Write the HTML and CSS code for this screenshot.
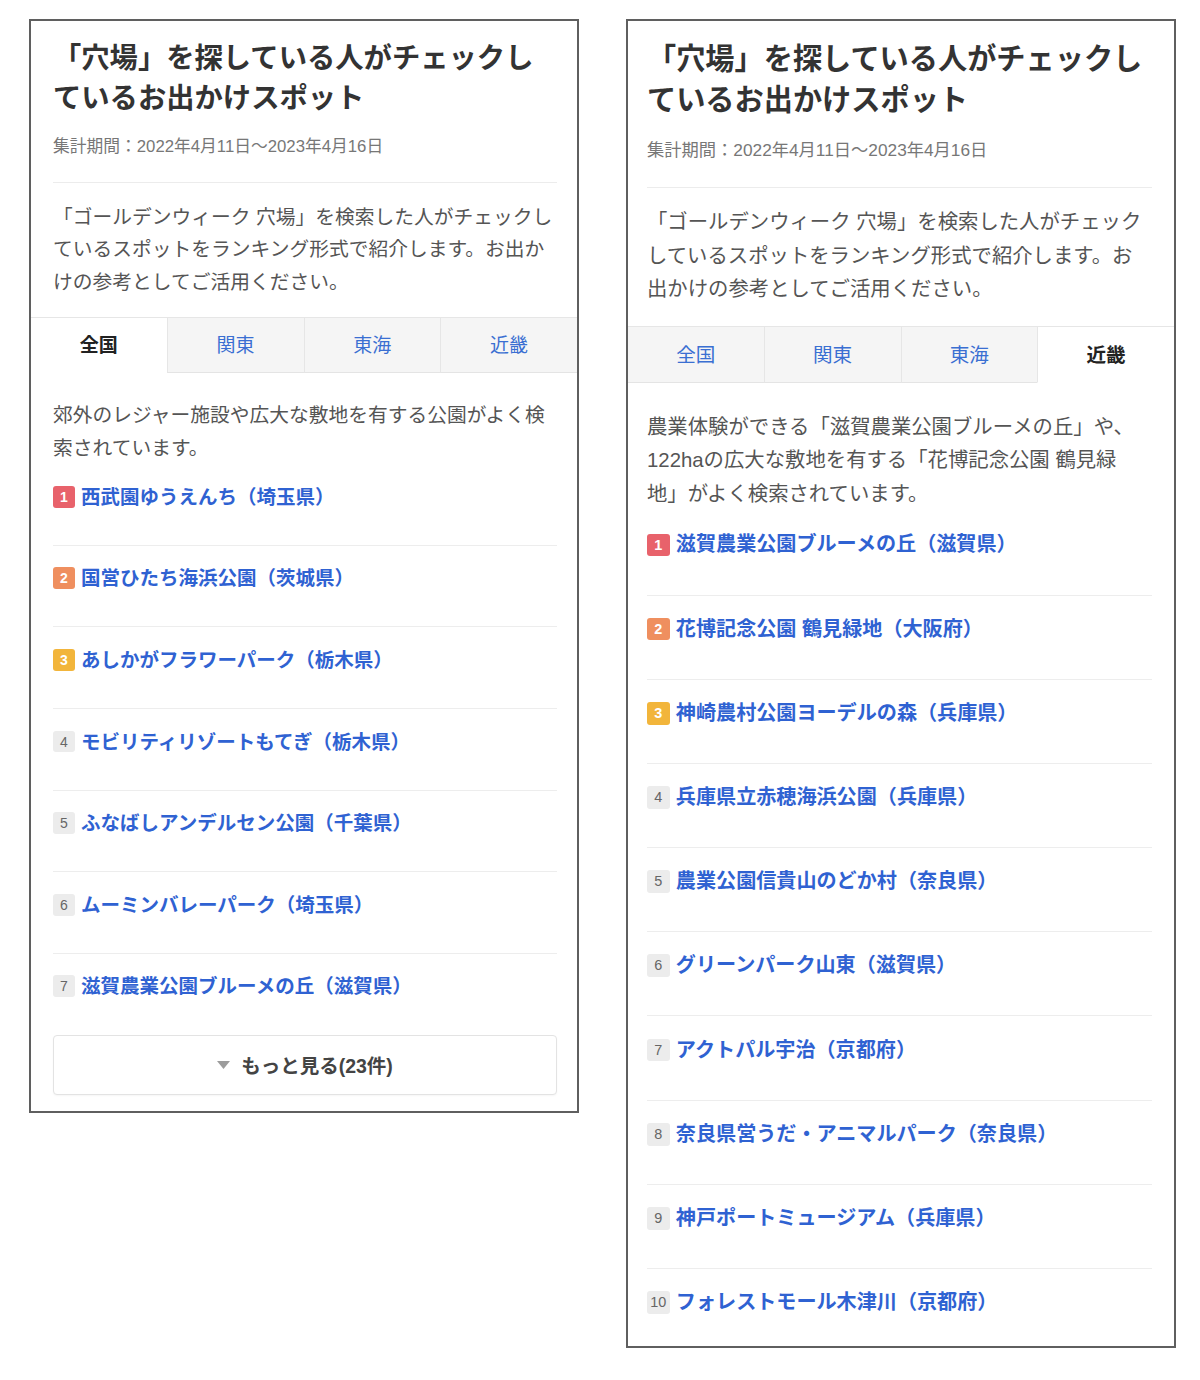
FILE: index.html
```html
<!DOCTYPE html>
<html lang="ja">
<head>
<meta charset="utf-8">
<title>「穴場」を探している人がチェックしているお出かけスポット</title>
<link rel="stylesheet" href="styles.css">
</head>
<body>
<main class="page">

  <section class="panel">
    <div class="panel__head">
      <h2 class="panel__title">「穴場」を探している人がチェックしているお出かけスポット</h2>
      <p class="panel__period">集計期間：2022年4月11日〜2023年4月16日</p>
    </div>
    <p class="panel__lead">「ゴールデンウィーク 穴場」を検索した人がチェックしているスポットをランキング形式で紹介します。お出かけの参考としてご活用ください。</p>
    <ul class="tabs">
      <li class="tabs__item tabs__item--active">全国</li>
      <li class="tabs__item">関東</li>
      <li class="tabs__item">東海</li>
      <li class="tabs__item">近畿</li>
    </ul>
    <div class="panel__body">
      <p class="panel__note">郊外のレジャー施設や広大な敷地を有する公園がよく検索されています。</p>
      <ol class="ranking">
        <li class="ranking__item"><span class="rank rank--1">1</span><a class="ranking__link" href="#">西武園ゆうえんち（埼玉県）</a></li>
        <li class="ranking__item"><span class="rank rank--2">2</span><a class="ranking__link" href="#">国営ひたち海浜公園（茨城県）</a></li>
        <li class="ranking__item"><span class="rank rank--3">3</span><a class="ranking__link" href="#">あしかがフラワーパーク（栃木県）</a></li>
        <li class="ranking__item"><span class="rank">4</span><a class="ranking__link" href="#">モビリティリゾートもてぎ（栃木県）</a></li>
        <li class="ranking__item"><span class="rank">5</span><a class="ranking__link" href="#">ふなばしアンデルセン公園（千葉県）</a></li>
        <li class="ranking__item"><span class="rank">6</span><a class="ranking__link" href="#">ムーミンバレーパーク（埼玉県）</a></li>
        <li class="ranking__item"><span class="rank">7</span><a class="ranking__link" href="#">滋賀農業公園ブルーメの丘（滋賀県）</a></li>
      </ol>
      <button class="more" type="button"><svg class="more__icon" viewBox="0 0 13 8" aria-hidden="true"><polygon points="0,0 13,0 6.5,8" fill="#9c9c9c"/></svg>もっと見る(23件)</button>
    </div>
  </section>

  <section class="panel panel--large panel--full">
    <div class="panel__head">
      <h2 class="panel__title">「穴場」を探している人がチェックしているお出かけスポット</h2>
      <p class="panel__period">集計期間：2022年4月11日〜2023年4月16日</p>
    </div>
    <p class="panel__lead">「ゴールデンウィーク 穴場」を検索した人がチェックしているスポットをランキング形式で紹介します。お出かけの参考としてご活用ください。</p>
    <ul class="tabs">
      <li class="tabs__item">全国</li>
      <li class="tabs__item">関東</li>
      <li class="tabs__item">東海</li>
      <li class="tabs__item tabs__item--active">近畿</li>
    </ul>
    <div class="panel__body">
      <p class="panel__note">農業体験ができる「滋賀農業公園ブルーメの丘」や、122haの広大な敷地を有する「花博記念公園 鶴見緑地」がよく検索されています。</p>
      <ol class="ranking">
        <li class="ranking__item"><span class="rank rank--1">1</span><a class="ranking__link" href="#">滋賀農業公園ブルーメの丘（滋賀県）</a></li>
        <li class="ranking__item"><span class="rank rank--2">2</span><a class="ranking__link" href="#">花博記念公園 鶴見緑地（大阪府）</a></li>
        <li class="ranking__item"><span class="rank rank--3">3</span><a class="ranking__link" href="#">神崎農村公園ヨーデルの森（兵庫県）</a></li>
        <li class="ranking__item"><span class="rank">4</span><a class="ranking__link" href="#">兵庫県立赤穂海浜公園（兵庫県）</a></li>
        <li class="ranking__item"><span class="rank">5</span><a class="ranking__link" href="#">農業公園信貴山のどか村（奈良県）</a></li>
        <li class="ranking__item"><span class="rank">6</span><a class="ranking__link" href="#">グリーンパーク山東（滋賀県）</a></li>
        <li class="ranking__item"><span class="rank">7</span><a class="ranking__link" href="#">アクトパル宇治（京都府）</a></li>
        <li class="ranking__item"><span class="rank">8</span><a class="ranking__link" href="#">奈良県営うだ・アニマルパーク（奈良県）</a></li>
        <li class="ranking__item"><span class="rank">9</span><a class="ranking__link" href="#">神戸ポートミュージアム（兵庫県）</a></li>
        <li class="ranking__item"><span class="rank">10</span><a class="ranking__link" href="#">フォレストモール木津川（京都府）</a></li>
      </ol>
    </div>
  </section>

</main>
</body>
</html>
```
FILE: styles.css
```css
* {
  box-sizing: border-box;
  margin: 0;
  padding: 0;
}

body {
  background: #fff;
  color: #333;
  font-family: "Liberation Sans", "Noto Sans CJK JP", "Noto Sans", sans-serif;
  text-spacing-trim: space-all;
}

.page {
  display: flex;
  align-items: flex-start;
  gap: 47px;
  padding: 19px 0 0 29px;
}

/* panel */
.panel {
  --pl: 22px;
  --pr: 20px;
  width: 550px;
  flex: none;
  border: 2px solid #5f5f5f;
  background: #fff;
  font-size: 16px;
}

.panel--large {
  --pl: 19px;
  --pr: 22px;
  font-size: 16.5px;
}

.panel__head {
  margin: 0 var(--pr) 0 var(--pl);
  padding: 1.1em 0 1.4375em;
  border-bottom: 1px solid #ececec;
}

.panel__title {
  font-size: 1.77em;
  line-height: 1.4124;
  font-weight: 700;
  color: #333;
}

.panel__period {
  margin-top: 0.955em;
  font-size: 1.047em;
  line-height: 1.433;
  color: #777;
}

.panel__lead {
  padding: 0.9114em var(--pr) 0.9367em var(--pl);
  font-size: 1.234375em;
  line-height: 1.6456;
  color: #555;
}

/* tabs */
.tabs {
  display: flex;
  height: 3.5em;
  list-style: none;
  border-top: 1px solid #e6e6e6;
}

.tabs__item {
  flex: 1;
  display: flex;
  align-items: center;
  justify-content: center;
  padding-bottom: 2px;
  font-size: 1.1875em;
  color: #3a6fd2;
  background: #f5f5f5;
  border-bottom: 1px solid #e4e4e4;
}

.tabs__item + .tabs__item {
  border-left: 1px solid #e6e6e6;
}

.tabs__item--active {
  background: #fff;
  color: #222;
  font-weight: 700;
  border-bottom-color: transparent;
}

/* body */
.panel__body {
  padding: 1.65625em var(--pr) 1em var(--pl);
}

.panel--full .panel__body {
  padding-bottom: 0;
}

.panel__note {
  font-size: 1.234375em;
  line-height: 1.6456;
  color: #555;
}

/* ranking */
.ranking {
  list-style: none;
}

.ranking__item {
  display: flex;
  align-items: center;
  padding: 1.09375em 0 2.073em;
  line-height: 1.875em;
  border-bottom: 1px solid #ededed;
}

.ranking__item:last-child {
  border-bottom: none;
}

.panel--full .ranking__item:last-child {
  padding-bottom: 1.717em;
}

.rank {
  flex: none;
  width: 1.5714em;
  height: 1.5714em;
  margin-right: 0.4286em;
  border-radius: 3px;
  font-size: 0.875em;
  line-height: 1.5714em;
  text-align: center;
  font-weight: 400;
  color: #666;
  background: #ececec;
}

.rank--1,
.rank--2,
.rank--3 {
  color: #fff;
  font-weight: 700;
}

.rank--1 { background: #e8626b; }
.rank--2 { background: #ef8f5f; }
.rank--3 { background: #f2b53b; }

.ranking__link {
  font-size: 1.21875em;
  font-weight: 700;
  color: #2f62d2;
  text-decoration: none;
}

/* more button */
.more {
  display: flex;
  align-items: center;
  justify-content: center;
  width: 100%;
  height: 3.077em;
  border: 1px solid #e3e3e3;
  border-radius: 4px;
  background: #fff;
  box-shadow: 0 1px 2px rgba(0, 0, 0, 0.04);
  font-family: inherit;
  font-size: 1.21875em;
  font-weight: 700;
  color: #444;
  cursor: pointer;
}

.more__icon {
  width: 13px;
  height: 8px;
  margin-right: 11px;
}
```
